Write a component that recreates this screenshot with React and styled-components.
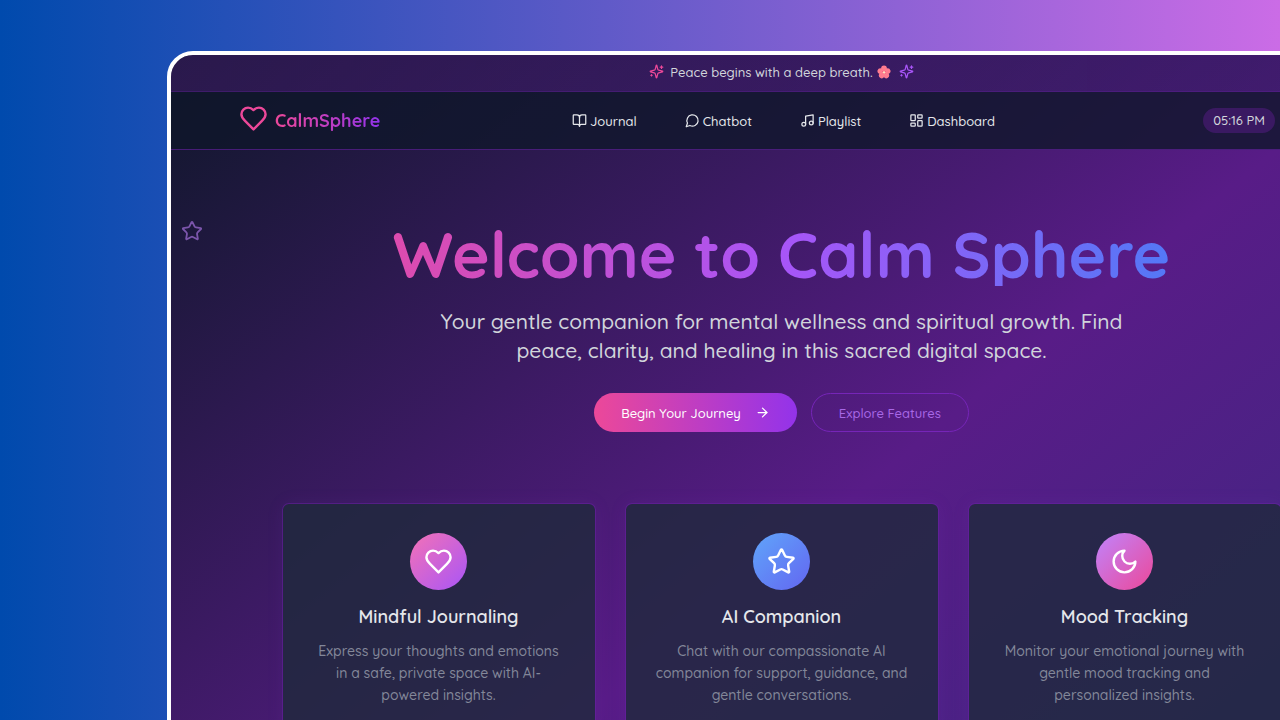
import styled, { createGlobalStyle, css } from "styled-components";
import { ArrowRight, BookOpen, LayoutDashboard, Music, Star } from "lucide-react";

const Icon = ({ size, color = "currentColor", className, children }) => (
    <svg
        className={className}
        width={size}
        height={size}
        viewBox="0 0 24 24"
        fill="none"
        stroke={color}
        strokeWidth="2"
        strokeLinecap="round"
        strokeLinejoin="round"
        aria-hidden="true"
    >
        {children}
    </svg>
)

const Heart = (props) => (
    <Icon {...props}>
        <path d="M19 14c1.49-1.46 3-3.21 3-5.5A5.5 5.5 0 0 0 16.5 3c-1.76 0-3 .5-4.5 2-1.5-1.5-2.74-2-4.5-2A5.5 5.5 0 0 0 2 8.5c0 2.3 1.5 4.05 3 5.5l7 7Z" />
    </Icon>
)

const Moon = (props) => (
    <Icon {...props}>
        <path d="M12 3a6 6 0 0 0 9 9 9 9 0 1 1-9-9Z" />
    </Icon>
)

const MessageCircle = (props) => (
    <Icon {...props}>
        <path d="M7.9 20A9 9 0 1 0 4 16.1L2 22Z" />
    </Icon>
)

const Sparkles = (props) => (
    <Icon {...props}>
        <path d="M9.937 15.5A2 2 0 0 0 8.5 14.063l-6.135-1.582a.5.5 0 0 1 0-.962L8.5 9.936A2 2 0 0 0 9.937 8.5l1.582-6.135a.5.5 0 0 1 .963 0L14.063 8.5A2 2 0 0 0 15.5 9.937l6.135 1.581a.5.5 0 0 1 0 .964L15.5 14.063a2 2 0 0 0-1.437 1.437l-1.582 6.135a.5.5 0 0 1-.963 0z" />
        <path d="M20 3v4M22 5h-4M4 17v2M5 18H3" />
    </Icon>
)

const Blossom = () => (
    <svg width="14" height="14" viewBox="0 0 24 24" aria-hidden="true">
        {[0, 72, 144, 216, 288].map((angle) => (
            <g key={angle} transform={`rotate(${angle} 12 12.5)`}>
                <ellipse cx="12" cy="6.5" rx="5" ry="5.5" fill="#ff7b8f" />
                <path d="M12 12.5V9" stroke="#e8436a" strokeWidth="1" />
            </g>
        ))}
        <circle cx="12" cy="12.5" r="2" fill="#fde0c0" />
    </svg>
)

const links = [
    { name: "Journal", Icon: BookOpen },
    { name: "Chatbot", Icon: MessageCircle },
    { name: "Playlist", Icon: Music },
    { name: "Dashboard", Icon: LayoutDashboard }
]

const features = [
    {
        title: "Mindful Journaling",
        lines: ["Express your thoughts and emotions", "in a safe, private space with AI-", "powered insights."],
        Icon: Heart,
        from: "#f472b6",
        to: "#a855f7"
    },
    {
        title: "AI Companion",
        lines: ["Chat with our compassionate AI", "companion for support, guidance, and", "gentle conversations."],
        Icon: Star,
        from: "#60a5fa",
        to: "#6366f1"
    },
    {
        title: "Mood Tracking",
        lines: ["Monitor your emotional journey with", "gentle mood tracking and", "personalized insights."],
        Icon: Moon,
        from: "#c084fc",
        to: "#ec4899"
    }
]

const App = () => {
    return (
        <>
            <GlobalStyle />
            <Backdrop>
                <Frame>
                    <Banner>
                        <Sparkles size={15} color="#ec4899" />
                        <p>Peace begins with a deep breath.</p>
                        <Blossom />
                        <LastSparkle size={15} color="#a855f7" />
                    </Banner>
                    <Header>
                        <Logo href="#home">
                            <Heart size={29} color="#ec4899" />
                            <span>CalmSphere</span>
                        </Logo>
                        <Nav>
                            {links.map(({ name, Icon }) => (
                                <a key={name} href={`#${name.toLowerCase()}`}>
                                    <Icon size={15} />
                                    {name}
                                </a>
                            ))}
                        </Nav>
                        <Clock>05:16 PM</Clock>
                    </Header>
                    <Hero>
                        <FloatingStar size={22} />
                        <h1>Welcome to Calm Sphere</h1>
                        <p>
                            Your gentle companion for mental wellness and spiritual growth. Find
                            <br />
                            peace, clarity, and healing in this sacred digital space.
                        </p>
                        <Actions>
                            <Button $primary>
                                Begin Your Journey
                                <ArrowRight size={15} />
                            </Button>
                            <Button>Explore Features</Button>
                        </Actions>
                    </Hero>
                    <Cards>
                        {features.map(({ title, lines, Icon, from, to }) => (
                            <Card key={title}>
                                <Bubble $from={from} $to={to}>
                                    <Icon size={29} />
                                </Bubble>
                                <h3>{title}</h3>
                                <p>
                                    {lines.map((line) => (
                                        <span key={line}>{line} </span>
                                    ))}
                                </p>
                            </Card>
                        ))}
                    </Cards>
                </Frame>
            </Backdrop>
        </>
    )
}

const GlobalStyle = createGlobalStyle`
    *{
        box-sizing: border-box;
        margin: 0;
        padding: 0;
    }
    body{
        font-family: Quicksand, Lato, sans-serif;
        color: #d1d5db;
    }
    a{
        color: inherit;
        text-decoration: none;
    }
    svg{
        flex-shrink: 0;
    }
`

const Backdrop = styled.div`
    height: 100vh;
    overflow: hidden;
    padding: 51px 0 0 167px;
    background: linear-gradient(90deg, #004aad, #cb6ce6);
`

const Frame = styled.div`
    min-height: 140vh;
    margin-right: -116px;
    overflow: hidden;
    border: 4px solid #fff;
    border-radius: 26px;
    background: linear-gradient(to bottom right, #0f172a, #581c87, #312e81);
`

const Banner = styled.div`
    display: flex;
    align-items: center;
    justify-content: center;
    height: 37px;
    padding-bottom: 3px;
    font-size: 13px;
    font-weight: 500;
    background: linear-gradient(90deg, rgba(88, 28, 135, 0.36), rgba(30, 27, 75, 0.4));
    border-bottom: 1px solid rgba(107, 33, 168, 0.3);
    p{
        margin: 0 4px 0 6px;
    }
`

const LastSparkle = styled(Sparkles)`
    margin-left: 8px;
`

const Header = styled.header`
    display: grid;
    grid-template-columns: 1fr auto 1fr;
    align-items: center;
    height: 58px;
    padding: 0 64px 0 68px;
    background: rgba(15, 23, 42, 0.8);
    border-bottom: 1px solid rgba(107, 33, 168, 0.6);
`

const Logo = styled.a`
    display: flex;
    align-items: flex-start;
    gap: 7px;
    font-size: 18px;
    font-weight: 700;
    line-height: 34px;
    span{
        color: transparent;
        background: linear-gradient(90deg, #ec4899, #9333ea);
        background-clip: text;
    }
`

const Nav = styled.nav`
    display: flex;
    gap: 48px;
    font-size: 13px;
    font-weight: 500;
    color: #e5e7eb;
    a{
        display: flex;
        align-items: center;
        gap: 3px;
    }
`

const Clock = styled.time`
    justify-self: end;
    margin-right: 53px;
    padding: 0 10px;
    border-radius: 13px;
    font-size: 13px;
    font-weight: 500;
    line-height: 25px;
    background: rgba(88, 28, 135, 0.5);
`

const Hero = styled.section`
    position: relative;
    padding: 72px 0 71px;
    text-align: center;
    h1{
        max-width: 1000px;
        margin: 0 auto 21px;
        font-size: 64px;
        line-height: 64px;
        color: transparent;
        background: linear-gradient(90deg, #ec4899, #a855f7, #3b82f6);
        background-clip: text;
    }
    p{
        margin-bottom: 28px;
        font-size: 21px;
        font-weight: 500;
        line-height: 29px;
    }
`

const FloatingStar = styled(Star)`
    position: absolute;
    top: 70px;
    left: 10px;
    color: #7b55ab;
`

const Actions = styled.div`
    display: flex;
    justify-content: center;
    gap: 14px;
`

const Button = styled.button`
    display: flex;
    align-items: center;
    gap: 14px;
    height: 39px;
    padding: 0 27px;
    border: 1px solid #7625b8;
    border-radius: 20px;
    font: inherit;
    font-size: 13px;
    font-weight: 500;
    color: #a868e6;
    background: transparent;
    cursor: pointer;
    ${(props) => props.$primary && css`
        border: none;
        color: #fff;
        background: linear-gradient(90deg, #ec4899, #9333ea);
    `}
`

const Cards = styled.section`
    display: grid;
    grid-template-columns: repeat(3, 1fr);
    gap: 29px;
    max-width: 1000px;
    margin: 0 auto;
`

const Card = styled.article`
    display: flex;
    flex-direction: column;
    align-items: center;
    padding: 29px 20px;
    border: 1px solid rgba(107, 33, 168, 0.5);
    border-radius: 7px;
    text-align: center;
    background: rgba(30, 41, 59, 0.8);
    background-clip: padding-box;
    box-shadow: 0 0 18px rgba(147, 51, 234, 0.08);
    h3{
        margin: 14px 0 10px;
        font-size: 18px;
        font-weight: 600;
        line-height: 26px;
        color: #e5e7eb;
    }
    p{
        font-size: 14px;
        font-weight: 500;
        line-height: 22px;
        color: #838799;
    }
    p span{
        display: block;
    }
`

const Bubble = styled.div`
    display: flex;
    align-items: center;
    justify-content: center;
    width: 57px;
    height: 57px;
    border-radius: 50%;
    color: #fff;
    background: linear-gradient(135deg, ${(props) => props.$from}, ${(props) => props.$to});
`

export default App
